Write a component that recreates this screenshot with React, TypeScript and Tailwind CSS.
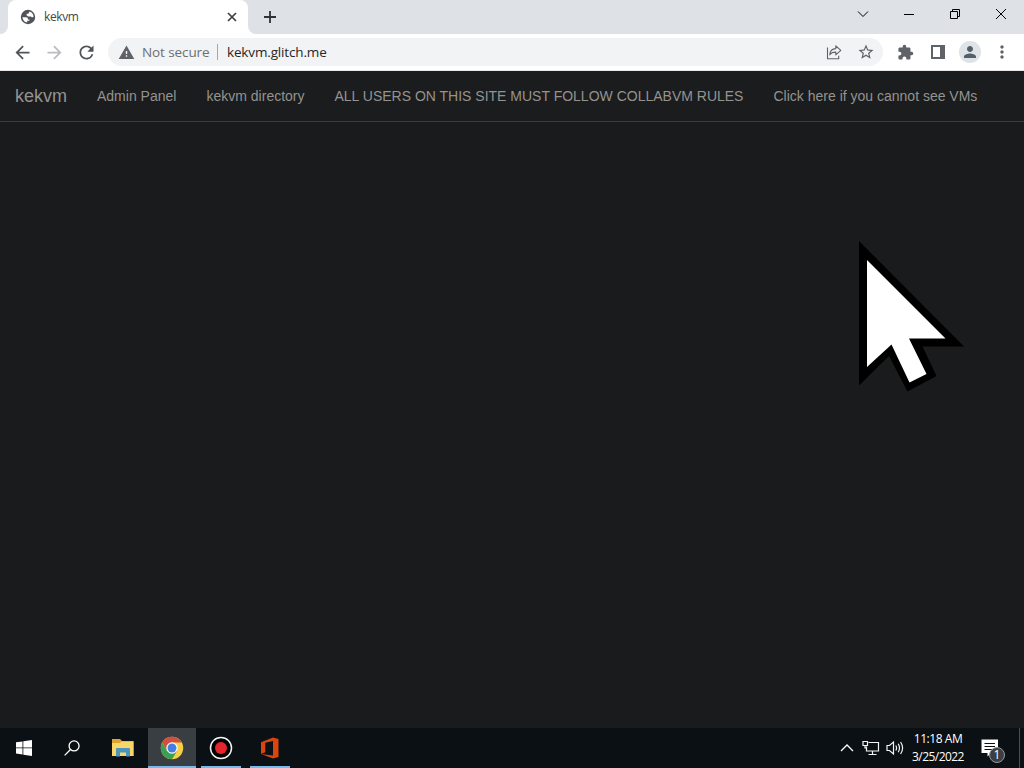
import type { ReactNode } from 'react'
import { MdArrowBack, MdArrowForward, MdExtension, MdMoreVert, MdPerson, MdRefresh, MdStarBorder, MdWarning } from 'react-icons/md'

const navLinks = [
  { label: 'Admin Panel', width: 'w-[79.5px]' },
  { label: 'kekvm directory', width: 'w-[98px]' },
  { label: 'ALL USERS ON THIS SITE MUST FOLLOW COLLABVM RULES', width: 'w-[409px]' },
  { label: 'Click here if you cannot see VMs', width: 'w-[205px]' },
]

function GlobeIcon() {
  return (
    <svg width="16" height="16" viewBox="0 0 16 16">
      <circle cx="8" cy="8" r="7.2" fill="#505358" />
      <path d="M2.400 8.300H6q2.300.1 2 2.100h1.400v1.300H7.200v1.900Q3.200 13 2.400 8.300Z" fill="#fff" />
      <path d="M9.600 2.500q3.700 1.200 4 5.300l-1.600.6-1-.8H8.200L6.600 6.300V4.800h1.700Z" fill="#fff" />
    </svg>
  )
}

function ShareIcon() {
  return (
    <svg width="18" height="18" viewBox="0 0 18 18" fill="none" stroke="#5f6368" strokeWidth="1.1">
      <path d="M2.500 4.500v11.300h11.200v-3" />
      <path d="M4.800 11.800q.3-6 6-6.200V2.800l5 4.500-5 4.500V9.100q-4-.2-6 2.700Z" strokeLinejoin="round" />
    </svg>
  )
}

function WindowControls() {
  return (
    <div className="flex text-black">
      <div className="flex h-7 w-[46px] items-center justify-center">
        <svg width="12" height="12" viewBox="0 0 12 12" fill="none" stroke="currentColor">
          <path d="m1 3.500 5 5 5-5" />
        </svg>
      </div>
      <div className="flex h-7 w-[46px] items-center justify-center">
        <svg width="10" height="10" viewBox="0 0 10 10" stroke="currentColor">
          <path d="M0 5.500h10" />
        </svg>
      </div>
      <div className="flex h-7 w-[46px] items-center justify-center">
        <svg width="10" height="10" viewBox="0 0 10 10" fill="none" stroke="currentColor">
          <path d="M.5 2.500h7v7h-7ZM2.500 2.500v-2h7v7h-2" />
        </svg>
      </div>
      <div className="flex h-7 w-[46px] items-center justify-center">
        <svg width="10" height="10" viewBox="0 0 10 10" stroke="currentColor">
          <path d="m0 0 10 10M10 0 0 10" />
        </svg>
      </div>
    </div>
  )
}

function TabStrip() {
  return (
    <div className="flex h-[34px] bg-[#dee1e6]">
      <div className="flex w-2 flex-col justify-end bg-white">
        <div className="h-full rounded-br-lg bg-[#dee1e6]" />
      </div>
      <div className="bg-[#dee1e6]">
        <div className="flex h-[34px] w-[240px] items-center rounded-t-lg bg-white pr-[11px] pl-3">
          <GlobeIcon />
          <span className="ml-2 flex-1 font-['Open_Sans',sans-serif] text-[12px] tracking-[-0.4px] text-[#45474a]">kekvm</span>
          <svg width="10" height="10" viewBox="0 0 10 10" stroke="#3c4043" strokeWidth="1.700">
            <path d="m1 1 8 8M9 1 1 9" />
          </svg>
        </div>
      </div>
      <div className="w-2 bg-white">
        <div className="h-full rounded-bl-lg bg-[#dee1e6]" />
      </div>
      <div className="flex flex-1 justify-between pl-2">
        <svg className="mt-[11px]" width="12" height="12" viewBox="0 0 12 12" stroke="#303236" strokeWidth="1.800">
          <path d="M6 0v12M0 6h12" />
        </svg>
        <WindowControls />
      </div>
    </div>
  )
}

function Toolbar() {
  return (
    <div className="flex h-[37px] items-center border-b border-[#e4e7e8] bg-white text-[#5f6368]">
      <div className="flex w-[108px] shrink-0 items-center gap-[11px] pl-3">
        <MdArrowBack size={21} className="text-[#505357]" />
        <MdArrowForward size={21} className="text-[#bbbcbf]" />
        <MdRefresh size={21} className="text-[#505357]" />
      </div>
      <div className="flex h-7 w-[775px] items-center rounded-full bg-[#f1f3f4] pr-2 pl-[10px] font-['Open_Sans',sans-serif] text-[13.5px]">
        <MdWarning size={17} />
        <span className="ml-[7px] w-[68px] whitespace-nowrap tracking-[-0.1px] text-[#6c7075]">Not secure</span>
        <span className="ml-[7px] h-4 w-px bg-[#a4a8ac]" />
        <span className="ml-[9px] flex-1 tracking-[-0.15px] text-[#25272a]">kekvm.glitch.me</span>
        <ShareIcon />
        <MdStarBorder size={18} className="ml-[14px]" />
      </div>
      <MdExtension size={17} className="ml-[14px]" />
      <div className="ml-[17px] h-[14px] w-[14px] border-2 border-r-[5px] border-[#5f6368]" />
      <div className="ml-[14px] flex h-[22px] w-[22px] items-center justify-center rounded-full bg-[#dee3e7] text-[#51616b]">
        <MdPerson size={18} />
      </div>
      <MdMoreVert size={20} className="ml-[11px]" />
    </div>
  )
}

function Cursor() {
  return (
    <svg className="absolute top-[169px] left-[858px]" width="108" height="154" viewBox="858 240 108 154">
      <path d="m859 241 105 105.500H922.500L936.500 376 907.500 391.500 889 356l-30 29.500Z" fill="#000" />
      <path d="m867 260 78.500 78.500H909L926.500 374l-17 8.500-18-38L867 367Z" fill="#fff" />
    </svg>
  )
}

function TaskButton({ children, active, running, className }: { children: ReactNode; active?: boolean; running?: boolean; className: string }) {
  return (
    <div className={`flex h-10 flex-col items-center ${active ? 'bg-[#393e42]' : ''} ${className}`}>
      <div className="flex h-[38px] items-center pt-[2px]">{children}</div>
      {running && <div className="h-[2px] w-full bg-[#76b9ed]" />}
    </div>
  )
}

function Taskbar() {
  return (
    <div className="flex h-10 bg-[#0a1013] text-white">
      <TaskButton className="w-12">
        <svg width="16" height="16" viewBox="0 0 16 16" fill="#fff">
          <path d="M0 2.300 6.500 1.400v6.100H0ZM7.300 1.300 16 0v7.500H7.300ZM0 8.300h6.500v6.200L0 13.600ZM7.300 8.300H16V16l-8.700-1.300Z" />
        </svg>
      </TaskButton>
      <TaskButton className="w-12">
        <svg width="16" height="16" viewBox="0 0 17 17" fill="none" stroke="#fff" strokeWidth="1.400">
          <circle cx="10.700" cy="6.300" r="5.300" />
          <path d="M6.900 10.100.7 16.300" />
        </svg>
      </TaskButton>
      <TaskButton className="ml-[3px] w-12">
        <svg width="22" height="18" viewBox="0 0 22 18">
          <path d="M0 0h8l2 2h11.500v15H0Z" fill="#dfa32f" />
          <path d="M0 4h8l1.500-1.500h12V17H0Z" fill="#f8d768" />
          <path d="M4 17.500V10q0-1 1-1h12q1 0 1 1v7.500h-4v-4H8v4Z" fill="#4a96bf" />
        </svg>
      </TaskButton>
      <TaskButton active running className="ml-px w-12">
        <svg width="24" height="24" viewBox="0 0 24 24">
          <circle cx="12" cy="12" r="11.200" fill="#f7cf45" />
          <path d="M2.300 6.400A11.200 11.200 0 0 1 21.700 6.400H12L7 14.900Z" fill="#d34e40" />
          <path d="M2.300 6.400A11.200 11.200 0 0 0 12 23.200l5-8.300H7Z" fill="#38a052" />
          <circle cx="12" cy="12" r="5.700" fill="#fff" />
          <circle cx="12" cy="12" r="4.500" fill="#437ee0" />
        </svg>
      </TaskButton>
      <TaskButton running className="ml-[5px] w-10">
        <svg width="24" height="24" viewBox="0 0 24 24">
          <circle cx="12" cy="12" r="10.500" fill="#000" stroke="#f4f4f4" strokeWidth="1.500" />
          <circle cx="12" cy="12" r="6" fill="#e5242c" />
        </svg>
      </TaskButton>
      <TaskButton running className="ml-[9px] w-10">
        <svg width="20" height="22" viewBox="0 0 20 22">
          <path d="M1 5.200 13 .500 18.500 2v18L13 21.500 1 17.100l12 1.300V4L5.300 5.700v9.600L1 17.100Z" fill="#d8450f" />
        </svg>
      </TaskButton>
      <div className="ml-auto flex items-center">
        <svg width="14" height="14" viewBox="0 0 14 14" fill="none" stroke="#fff" strokeWidth="1.300">
          <path d="m1 10 6-6 6 6" />
        </svg>
        <svg className="ml-2" width="18" height="16" viewBox="0 0 18 16" fill="none" stroke="#f3f4f4" strokeWidth="1.200">
          <path d="M6.500 2.500h10v8.500H4.500V6.500M10.500 11v3M6.500 14.500h8M1 1.500h4.500v4H1ZM3 5.500v2.500h1.500" />
        </svg>
        <svg className="ml-[6px]" width="18" height="16" viewBox="0 0 18 16" fill="none" stroke="#f3f4f4" strokeWidth="1.200">
          <path d="M1 5.500h2.500L7.500 2v12l-4-3.500H1ZM9.800 5.500q1.500 2.500 0 5M12.200 3.800q2.600 4.200 0 8.400M14.600 2q4 6 0 12" />
        </svg>
        <div className="ml-[7px] w-[54px] text-center font-['Open_Sans',sans-serif] text-[12px] leading-[18px] whitespace-nowrap">
          <p className="tracking-[-0.450px]">11:18 AM</p>
          <p className="tracking-[-0.550px]">3/25/2022</p>
        </div>
        <div className="relative ml-4 h-10 w-[38px]">
          <svg className="mt-[11px]" width="18" height="18" viewBox="0 0 18 18">
            <path d="M.5.500H17V14h-7l-3.500 3.500V14h-6Z" fill="#fff" />
            <path d="M3.500 4.500h10.500M3.500 7.500h10.500M3.500 10.500h7.500" stroke="#0a1013" />
          </svg>
          <span className="absolute top-[19px] left-2 flex h-4 w-4 items-center justify-center rounded-full border border-[#999] bg-[#3c3f41] font-['Open_Sans',sans-serif] text-[12px]">
            1
          </span>
        </div>
        <div className="mr-1 h-10 w-px bg-[#4b5053]" />
      </div>
    </div>
  )
}

export default function App() {
  return (
    <div className="flex h-[768px] w-[1024px] flex-col overflow-hidden bg-[#1a1b1c]">
      <TabStrip />
      <Toolbar />
      <main className="relative flex-1 bg-[#1a1b1c] font-['Liberation_Sans',sans-serif]">
        <nav className="flex h-[51px] items-center gap-[30px] border-b border-[#3a3c3d] bg-[#1b1c1d] pl-[15px] text-[14px] whitespace-nowrap text-[#949390]">
          <a className="w-[52px] text-[18px]">kekvm</a>
          {navLinks.map((link) => (
            <a key={link.label} className={link.width}>
              {link.label}
            </a>
          ))}
        </nav>
        <Cursor />
      </main>
      <Taskbar />
    </div>
  )
}
